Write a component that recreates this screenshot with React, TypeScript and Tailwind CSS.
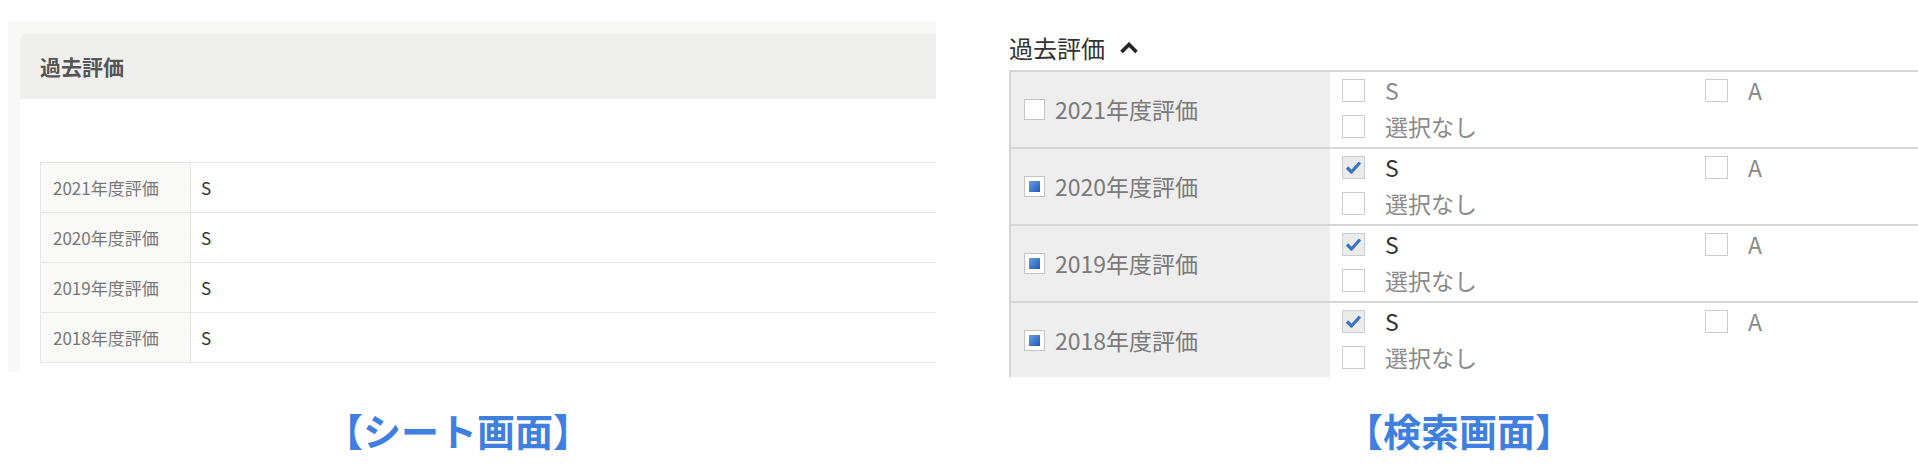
const FONT = { fontFamily: '"Noto Sans CJK JP", "Noto Sans", sans-serif' };

const sheetRows = ['2021年度評価', '2020年度評価', '2019年度評価', '2018年度評価'];

const searchRows = [
  { label: '2021年度評価', partial: false, s: false },
  { label: '2020年度評価', partial: true, s: true },
  { label: '2019年度評価', partial: true, s: true },
  { label: '2018年度評価', partial: true, s: true },
];

function OptionBox({ checked }: { checked: boolean }) {
  return (
    <span
      className={
        'flex h-[23px] w-[23px] shrink-0 items-center justify-center border border-[#cdcdcd] ' +
        (checked ? 'bg-[#ebebeb]' : 'bg-white')
      }
    >
      {checked && (
        <svg width="19" height="19" viewBox="0 0 19 19">
          <polyline
            points="3,9.5 7.5,14 16,4.5"
            fill="none"
            stroke="#3b73c6"
            strokeWidth="3.2"
            strokeLinejoin="round"
          />
        </svg>
      )}
    </span>
  );
}

function GroupBox({ partial }: { partial: boolean }) {
  return (
    <span className="flex h-[21px] w-[21px] shrink-0 items-center justify-center border border-[#c4c4c4] bg-white">
      {partial && <span className="h-[11px] w-[11px] bg-gradient-to-br from-[#6aa0e8] to-[#1d58b4]" />}
    </span>
  );
}

function Option({ text, checked }: { text: string; checked: boolean }) {
  return (
    <div className="flex h-[36px] items-center gap-[20px]">
      <OptionBox checked={checked} />
      <span className={'text-[23px] ' + (checked ? 'text-[#333]' : 'text-[#8a8a8a]')}>{text}</span>
    </div>
  );
}

export default function App() {
  return (
    <div className="flex h-[466px] w-[1918px] flex-col overflow-hidden bg-white" style={FONT}>
      <div className="flex h-[377px] shrink-0">
        {/* シート画面 */}
        <div className="ml-[8px] mt-[21px] h-[351px] w-[928px] shrink-0 overflow-hidden bg-[#f8f8f7] pl-[12px] pt-[13px]">
          <div className="flex h-full flex-col rounded-tl-[6px] bg-white">
            <div className="flex h-[65px] items-center rounded-tl-[6px] bg-[#efefee] pl-[20px]">
              <span className="text-[21px] font-bold text-[#555]">過去評価</span>
            </div>
            <div className="pl-[20px] pt-[63px]">
              <div className="border-l border-t border-[#e6e6e6]">
                {sheetRows.map((r) => (
                  <div key={r} className="flex h-[50px] border-b border-[#e6e6e6]">
                    <div className="flex w-[150px] shrink-0 items-center border-r border-[#e6e6e6] bg-[#f9f9f8] pl-[12px] text-[17px] text-[#777]">
                      {r}
                    </div>
                    <div className="flex items-center pl-[10px] text-[17px] text-[#333]">S</div>
                  </div>
                ))}
              </div>
            </div>
          </div>
        </div>

        {/* 検索画面 */}
        <div className="ml-[73px] min-w-0 flex-1 overflow-hidden pt-[30px]">
          <div className="mb-[4px] flex h-[36px] items-center gap-[14px]">
            <span className="text-[24px] text-[#333]">過去評価</span>
            <svg width="20" height="12" viewBox="0 0 20 12">
              <polyline points="2.5,10 10,2.5 17.5,10" fill="none" stroke="#222" strokeWidth="3.6" strokeLinejoin="miter" />
            </svg>
          </div>
          <div className="w-[1200px] border-l-2 border-t-2 border-[#d6d6d6]">
            {searchRows.map((r) => (
              <div key={r.label} className="flex h-[77px] border-b-2 border-[#d6d6d6]">
                <div className="flex w-[319px] shrink-0 items-center gap-[10px] bg-[#eeeeee] pl-[13px]">
                  <GroupBox partial={r.partial} />
                  <span className="text-[23px] text-[#7a7a7a]">{r.label}</span>
                </div>
                <div className="grid flex-1 grid-cols-[363px_363px] content-start pl-[12px]">
                  <Option text="S" checked={r.s} />
                  <Option text="A" checked={false} />
                  <Option text="選択なし" checked={false} />
                </div>
              </div>
            ))}
          </div>
        </div>
      </div>

      <div className="flex pt-[33px]">
        <div className="w-[916px] text-center text-[38px] font-bold leading-[40px] text-[#3f7fe0]">【シート画面】</div>
        <div className="ml-[84px] w-[918px] text-center text-[38px] font-bold leading-[40px] text-[#3f7fe0]">【検索画面】</div>
      </div>
    </div>
  );
}
